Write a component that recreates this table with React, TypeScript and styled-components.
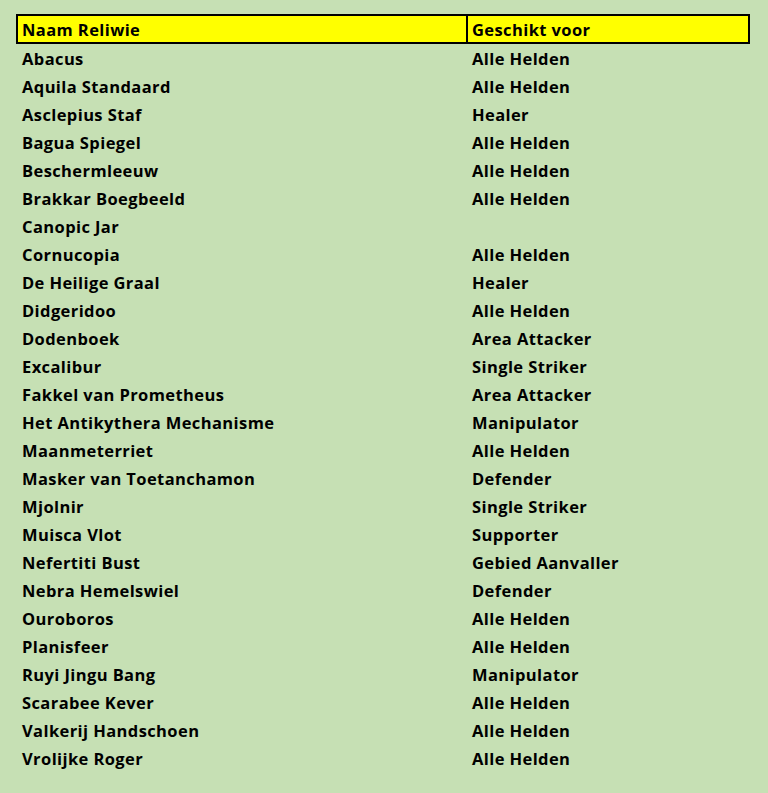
import styled, { createGlobalStyle } from 'styled-components';

const GlobalStyle = createGlobalStyle`
  html, body {
    margin: 0;
    background: #c6e0b4;
  }
  body {
    font-family: 'Open Sans', 'Liberation Sans', sans-serif;
  }
`;

const Page = styled.div`
  padding: 14px 0 0 16px;
  min-height: 793px;
  box-sizing: border-box;
`;

const Sheet = styled.div`
  width: 734px;
`;

const HeaderRow = styled.div`
  display: grid;
  grid-template-columns: 448px 1fr;
  height: 30px;
  box-sizing: border-box;
  border: 2px solid #000;
  background: #ffff00;
`;

const HeaderCell = styled.div<{ divider?: boolean }>`
  display: flex;
  align-items: center;
  padding: 1px 0 0 4px;
  border-left: ${(p) => (p.divider ? '2px solid #000' : 'none')};
  font-size: 16.5px;
  letter-spacing: 0.4px;
  font-weight: 700;
  color: #000;
  white-space: nowrap;
`;

const Row = styled.div`
  display: grid;
  grid-template-columns: 450px 1fr;
  height: 28px;
  box-sizing: border-box;
  align-items: center;
  padding-top: 1px;
`;

const Cell = styled.div`
  padding-left: 6px;
  font-size: 16.5px;
  letter-spacing: 0.4px;
  font-weight: 700;
  color: #000;
  white-space: nowrap;
`;

const rows: [string, string][] = [
  ['Abacus', 'Alle Helden'],
  ['Aquila Standaard', 'Alle Helden'],
  ['Asclepius Staf', 'Healer'],
  ['Bagua Spiegel', 'Alle Helden'],
  ['Beschermleeuw', 'Alle Helden'],
  ['Brakkar Boegbeeld', 'Alle Helden'],
  ['Canopic Jar', ''],
  ['Cornucopia', 'Alle Helden'],
  ['De Heilige Graal', 'Healer'],
  ['Didgeridoo', 'Alle Helden'],
  ['Dodenboek', 'Area Attacker'],
  ['Excalibur', 'Single Striker'],
  ['Fakkel van Prometheus', 'Area Attacker'],
  ['Het Antikythera Mechanisme', 'Manipulator'],
  ['Maanmeterriet', 'Alle Helden'],
  ['Masker van Toetanchamon', 'Defender'],
  ['Mjolnir', 'Single Striker'],
  ['Muisca Vlot', 'Supporter'],
  ['Nefertiti Bust', 'Gebied Aanvaller'],
  ['Nebra Hemelswiel', 'Defender'],
  ['Ouroboros', 'Alle Helden'],
  ['Planisfeer', 'Alle Helden'],
  ['Ruyi Jingu Bang', 'Manipulator'],
  ['Scarabee Kever', 'Alle Helden'],
  ['Valkerij Handschoen', 'Alle Helden'],
  ['Vrolijke Roger', 'Alle Helden'],
];

export default function App() {
  return (
    <>
      <GlobalStyle />
      <Page>
        <Sheet>
          <HeaderRow>
            <HeaderCell>Naam Reliwie</HeaderCell>
            <HeaderCell divider>Geschikt voor</HeaderCell>
          </HeaderRow>
          {rows.map(([name, role]) => (
            <Row key={name}>
              <Cell>{name}</Cell>
              <Cell>{role}</Cell>
            </Row>
          ))}
        </Sheet>
      </Page>
    </>
  );
}
